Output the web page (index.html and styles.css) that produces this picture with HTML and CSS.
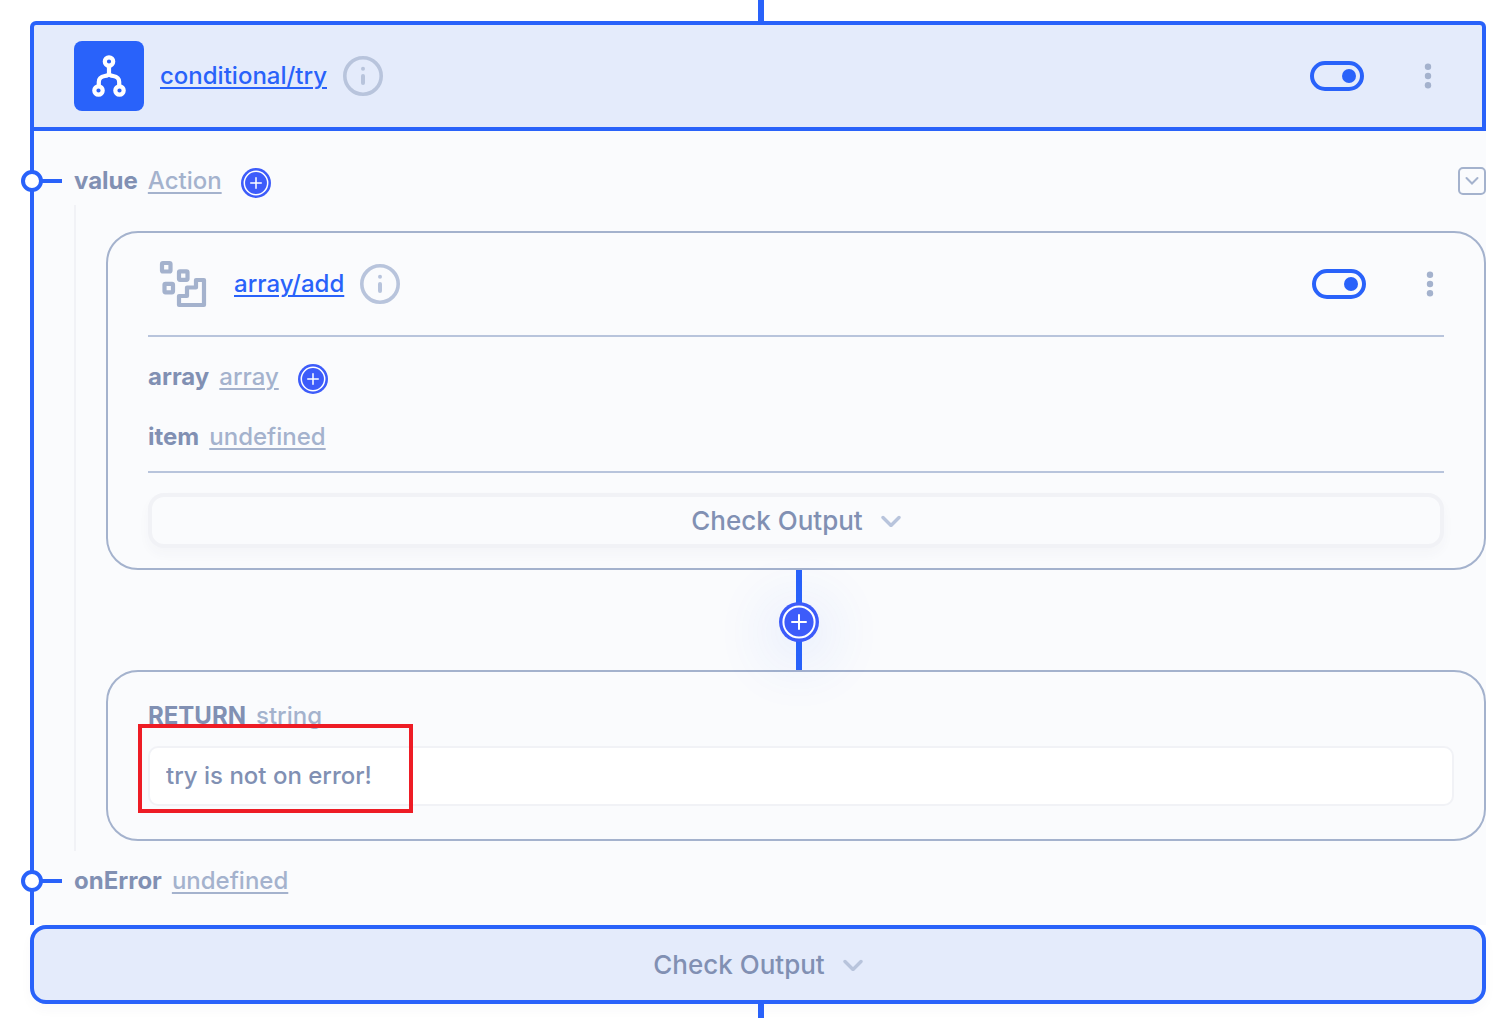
FILE: index.html
```html
<!DOCTYPE html>
<html lang="en">
<head>
<meta charset="utf-8">
<title>conditional/try</title>
<link rel="stylesheet" href="styles.css">
</head>
<body>
<svg class="sprite" aria-hidden="true">
  <symbol id="info" viewBox="0 0 40 40"><circle cx="20" cy="20" r="18.2" fill="none" stroke="currentColor" stroke-width="3.6"/><circle cx="20" cy="12.7" r="2" fill="currentColor"/><path d="M20 20v7" stroke="currentColor" stroke-width="4" stroke-linecap="round"/></symbol>
  <symbol id="dots" viewBox="0 0 28 28"><g fill="currentColor"><circle cx="14" cy="4.7" r="3.2"/><circle cx="14" cy="14" r="3.2"/><circle cx="14" cy="23.2" r="3.2"/></g></symbol>
  <symbol id="plus" viewBox="0 0 40 40"><circle cx="20" cy="20" r="20" fill="#3d5cfa"/><circle cx="20" cy="20" r="15.6" fill="none" stroke="#fff" stroke-width="2"/><path d="M20 13v14M13 20h14" stroke="#fff" stroke-width="2" stroke-linecap="round"/></symbol>
  <symbol id="chevron" viewBox="0 0 20 12"><path d="M2 2.500l8 8 8-8" fill="none" stroke="currentColor" stroke-width="3.4" stroke-linecap="round" stroke-linejoin="round"/></symbol>
</svg>
<main class="flow">
  <div class="connector connector-top"></div>
  <section class="node">
    <header class="node-header">
      <span class="node-icon">
        <svg width="70" height="70" viewBox="0 0 70 70" fill="none" stroke="#fff" stroke-width="4.200"><circle cx="35" cy="20.500" r="4.200"/><circle cx="24.500" cy="49.500" r="4.200"/><circle cx="45.500" cy="49.500" r="4.200"/><path d="M35 25v9M24.800 45v-4c0-4 3-5.500 6-6 2-.3 3.500-.7 4.200-2 .7 1.300 2.200 1.700 4.200 2 3 .5 6 2 6 6v4"/></svg>
      </span>
      <a class="node-name" href="#try">conditional/try</a>
      <button class="icon-button info" aria-label="About conditional/try"><svg><use href="#info"/></svg></button>
      <input class="toggle" type="checkbox" checked aria-label="Enable conditional/try">
      <button class="icon-button dots" aria-label="More options"><svg><use href="#dots"/></svg></button>
    </header>
    <div class="node-body">
      <div class="param port">
        <span class="param-name">value</span>
        <a class="param-type" href="#action">Action</a>
        <button class="icon-button add" aria-label="Add action"><svg><use href="#plus"/></svg></button>
        <button class="icon-button collapse" aria-label="Collapse value"><svg viewBox="0 0 28 28" fill="none" stroke="currentColor" stroke-width="2"><rect x="1" y="1" width="26" height="26" rx="4"/><path d="M8.500 11l5.500 5.500 5.500-5.500" stroke-linecap="round"/></svg></button>
      </div>
      <div class="nested">
        <section class="card">
          <header class="card-header">
            <span class="card-icon">
              <svg width="70" height="70" viewBox="0 0 70 70" fill="none" stroke="currentColor" stroke-width="4.200" stroke-linejoin="round"><rect x="14" y="14" width="8.500" height="8.500" rx="1"/><rect x="31" y="22.300" width="8.500" height="8.500" rx="1"/><rect x="16.500" y="34.800" width="8.500" height="8.500" rx="1"/><path d="M56 31V56H31v-9h8v-8.500h9V31z"/></svg>
            </span>
            <a class="node-name" href="#add">array/add</a>
            <button class="icon-button info" aria-label="About array/add"><svg><use href="#info"/></svg></button>
            <input class="toggle" type="checkbox" checked aria-label="Enable array/add">
            <button class="icon-button dots" aria-label="More options"><svg><use href="#dots"/></svg></button>
          </header>
          <div class="card-params">
            <div class="param">
              <span class="param-name">array</span>
              <a class="param-type" href="#array">array</a>
              <button class="icon-button add" aria-label="Add array item"><svg><use href="#plus"/></svg></button>
            </div>
            <div class="param">
              <span class="param-name">item</span>
              <a class="param-type" href="#item">undefined</a>
            </div>
          </div>
          <button class="output">Check Output <svg><use href="#chevron"/></svg></button>
        </section>
        <div class="link">
          <button class="icon-button add-step" aria-label="Add step"><svg><use href="#plus"/></svg></button>
        </div>
        <section class="card return">
          <label class="param" for="return-value">
            <span class="param-name">RETURN</span>
            <span class="param-kind">string</span>
          </label>
          <div class="field">
            <input id="return-value" class="field-input" type="text" value="try is not on error!">
            <div class="highlight"></div>
          </div>
        </section>
      </div>
      <div class="param port">
        <span class="param-name">onError</span>
        <a class="param-type" href="#onerror">undefined</a>
      </div>
    </div>
    <button class="output output-main">Check Output <svg><use href="#chevron"/></svg></button>
  </section>
  <div class="connector connector-bottom"></div>
</main>
</body>
</html>
```
FILE: styles.css
```css
:root {
  --blue: #2962fa;
  --tint: #e4ebfb;
  --surface: #fafbfd;
  --text: #8190b3;
  --muted: #a4b2cd;
  --pale: #b8c4dc;
  --faint: #f1f2f6;
}

*, *::before, *::after { box-sizing: border-box; }

body {
  margin: 0;
  background: #fff;
  color: var(--text);
  font: 500 24px/32px Inter, "Liberation Sans", sans-serif;
}

.sprite { position: absolute; width: 0; height: 0; }

.flow { padding: 0 16px 0 30px; }

.connector { width: 6px; margin-left: 50%; background: var(--blue); }
.connector-top { height: 21px; }
.connector-bottom { height: 14px; }

.node-header, .card-header {
  display: flex;
  align-items: center;
  gap: 16px;
}

.node-header {
  padding: 16px 40px;
  border: 4px solid var(--blue);
  border-radius: 6px 6px 0 0;
  background: var(--tint);
}

.node-icon, .card-icon { display: flex; width: 70px; height: 70px; }
.node-icon { border-radius: 8px; background: var(--blue); }
.card-icon { color: var(--muted); }

a { text-underline-offset: 3px; text-decoration-thickness: 2px; }
.node-name { color: var(--blue); }

.icon-button {
  display: flex;
  flex: none;
  padding: 0;
  border: 0;
  border-radius: 50%;
  background: none;
  color: var(--muted);
}
.icon-button svg { width: 100%; height: 100%; }
.info { width: 40px; height: 40px; color: var(--pale); }
.dots { width: 28px; height: 28px; }

.toggle {
  appearance: none;
  flex: none;
  display: flex;
  align-items: center;
  width: 54px;
  height: 30px;
  margin: 0 34px 0 auto;
  padding: 0 4px;
  border: 4px solid var(--blue);
  border-radius: 16px;
}
.toggle::before {
  content: "";
  width: 14px;
  height: 14px;
  border-radius: 50%;
  background: var(--blue);
}
.toggle:checked { justify-content: flex-end; }

.node-body {
  padding: 26px 0 20px 40px;
  border-left: 4px solid var(--blue);
  background: var(--surface);
}

.param { display: flex; align-items: center; height: 48px; gap: 10px; }
.param-name { font-weight: 700; }
.param-type, .param-kind { color: var(--muted); }
.add { width: 30px; height: 30px; margin: 4px 0 0 9px; }
.collapse { width: 28px; height: 28px; margin-left: auto; border-radius: 4px; }

.port { position: relative; }
.port::before, .port::after { content: ""; position: absolute; }
.port::before {
  left: -53px;
  top: 13px;
  width: 22px;
  height: 22px;
  border: 4px solid var(--blue);
  border-radius: 50%;
  background: #fff;
}
.port::after {
  left: -32px;
  top: 22px;
  width: 20px;
  height: 4px;
  background: var(--blue);
}

.nested {
  margin-bottom: 6px;
  padding: 26px 0 10px 30px;
  border-left: 2px solid var(--faint);
}

.card {
  padding: 0 40px 20px;
  border: 2px solid var(--muted);
  border-radius: 32px;
}
.card-header { padding: 16px 0; }
.card-params {
  margin-bottom: 20px;
  padding: 10px 0 4px;
  border: solid var(--pale);
  border-width: 2px 0;
}
.card-params .param { height: 60px; }

.output {
  display: flex;
  align-items: center;
  justify-content: center;
  gap: 18px;
  width: 100%;
  height: 55px;
  padding: 0;
  border: 4px solid var(--faint);
  border-radius: 16px;
  background: var(--surface);
  box-shadow: 0 6px 12px rgba(60, 70, 110, 0.03);
  color: var(--text);
  font: 500 26px/32px Inter, "Liberation Sans", sans-serif;
}
.output svg { width: 20px; height: 12px; color: var(--pale); }
.output-main { height: 79px; border-color: var(--blue); background: var(--tint); }

.link {
  display: flex;
  align-items: center;
  justify-content: center;
  width: 6px;
  height: 100px;
  margin-left: 50%;
  padding-top: 4px;
  background: var(--blue);
}
.add-step { width: 40px; height: 40px; box-shadow: 0 10px 60px 10px rgba(41, 98, 250, 0.12); }

.return { padding: 20px 30px 33px 40px; }
.return .param { margin-bottom: 6px; }
.field { position: relative; }
.field-input {
  display: block;
  width: 100%;
  height: 60px;
  padding: 0 16px 2px;
  border: 2px solid var(--faint);
  border-radius: 10px;
  background: #fff;
  color: var(--text);
  font: inherit;
}
.highlight {
  position: absolute;
  left: -10px;
  top: -22px;
  width: 275px;
  height: 89px;
  border: 4px solid #ee1c25;
  pointer-events: none;
}
```
